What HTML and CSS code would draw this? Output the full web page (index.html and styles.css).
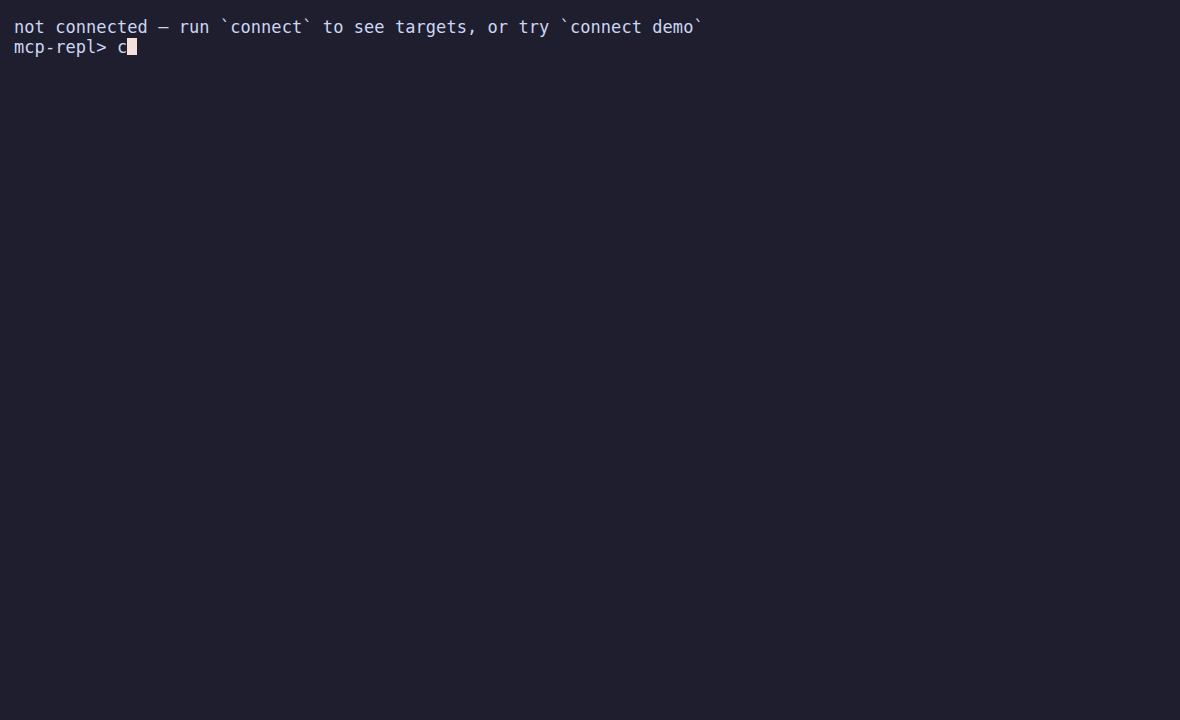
FILE: index.html
```html
<!DOCTYPE html>
<html lang="en">
<head>
<meta charset="utf-8">
<title>mcp-repl</title>
<link rel="stylesheet" href="styles.css">
</head>
<body>
<main class="terminal">
  <div class="line">not connected — run `connect` to see targets, or try `connect demo`</div>
  <div class="line"><span class="prompt">mcp-repl&gt; </span><span class="input">c</span><span class="cursor"></span></div>
</main>
</body>
</html>
```
FILE: styles.css
```css
html, body {
  margin: 0;
  padding: 0;
  height: 100%;
  background: #1e1e2e;
}
.terminal {
  box-sizing: border-box;
  height: 100%;
  padding: 17px 14px;
  font-family: "DejaVu Sans Mono", "Liberation Mono", monospace;
  font-size: 17px;
  line-height: 20px;
  letter-spacing: 0.06px;
  color: #cdd6f4;
}
.line {
  height: 20px;
  white-space: pre;
}
.cursor {
  display: inline-block;
  width: 10px;
  height: 17px;
  vertical-align: -2px;
  background: #f5e0dc;
}
```
